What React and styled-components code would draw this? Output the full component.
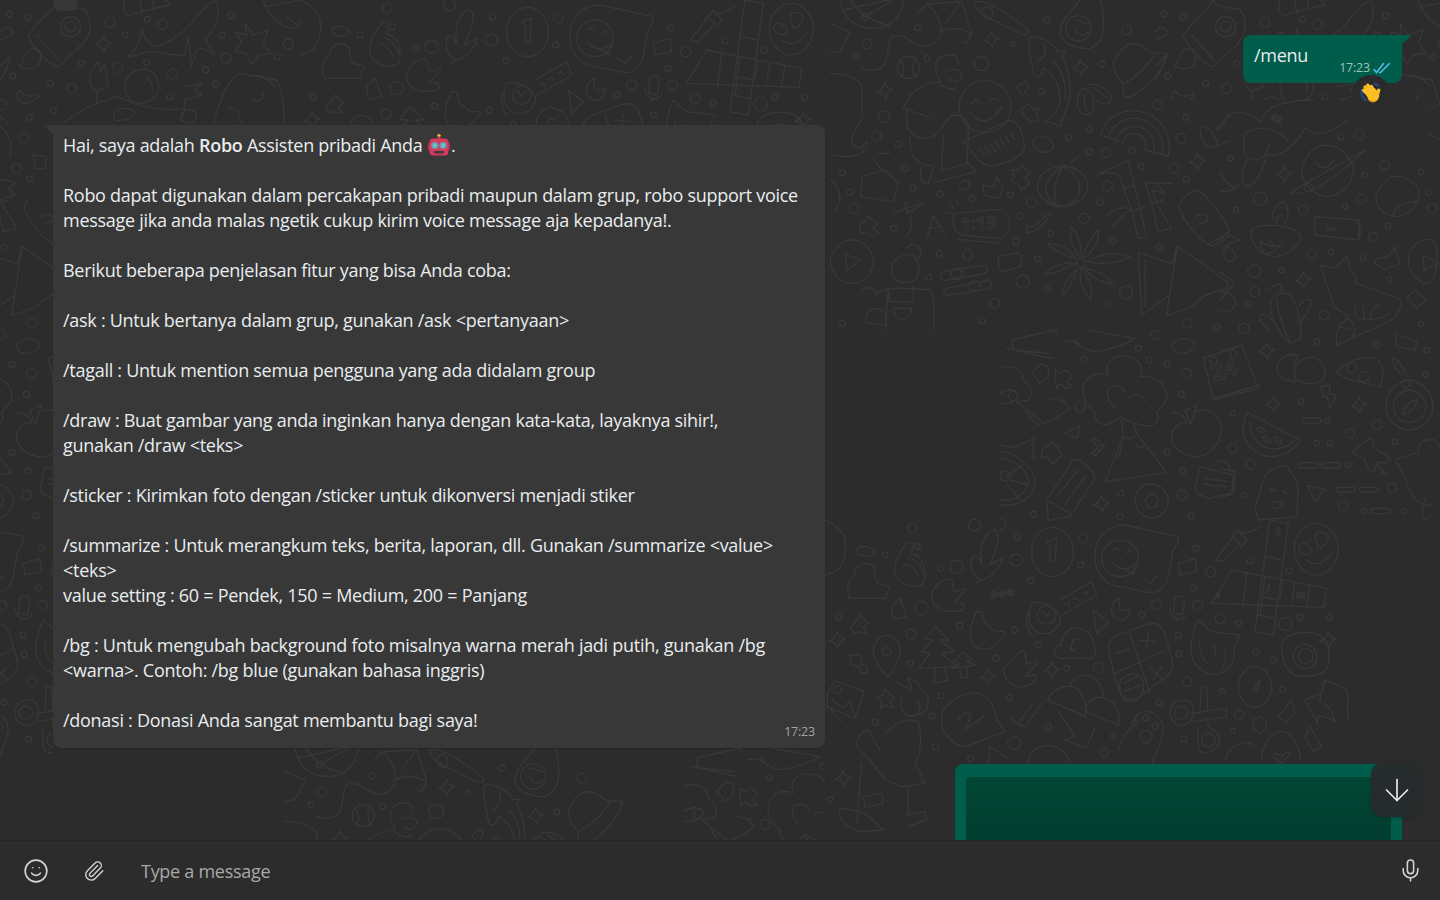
import React from "react";
import styled, { createGlobalStyle } from "styled-components";
import { ArrowDown, Mic, Paperclip, Smile } from "lucide-react";

const GlobalStyle = createGlobalStyle`
  html, body, #root { margin: 0; height: 100%; }
  body {
    background: #2c2c2c;
    overflow: hidden;
    font-family: "Open Sans", "Noto Sans", sans-serif;
  }
`;

const Page = styled.div`
  height: 900px;
  display: flex;
  flex-direction: column;
`;

const Chat = styled.main`
  position: relative;
  flex: 1;
  overflow: hidden;
  background: #2c2c2c;
  display: flex;
  flex-direction: column;
`;

const Wall = styled.svg`
  position: absolute;
  inset: 0;
  width: 1440px;
  height: 840px;
  fill: none;
  stroke: #383838;
  stroke-linecap: round;
  stroke-linejoin: round;

  text {
    fill: none;
    stroke: #383838;
    font-family: "Open Sans", sans-serif;
    font-weight: 700;
  }
`;

const PrevStub = styled.div`
  position: relative;
  flex: none;
  width: 23px;
  height: 11px;
  margin-left: 54px;
  background: #373737;
  border-radius: 0 0 6px 6px;
`;

const Row = styled.div`
  position: relative;
  flex: none;
  display: flex;
  justify-content: ${(p) => (p.$out ? "flex-end" : "flex-start")};
  margin-top: ${(p) => p.$top}px;
  padding: ${(p) => (p.$out ? "0 38px 0 0" : "0 0 0 53px")};
`;

const Bubble = styled.div`
  position: relative;
  box-sizing: border-box;
  font-size: 18px;
  line-height: 25px;
  letter-spacing: -0.28px;
  color: #e9edef;
  white-space: pre-wrap;
`;

const OutBubble = styled(Bubble)`
  width: 159px;
  height: 48px;
  padding: 8px 11px;
  background: #005c4b;
  border-radius: 8px 0 8px 8px;

  &::after {
    content: "";
    position: absolute;
    top: 0;
    right: -9px;
    width: 10px;
    height: 10px;
    background: #005c4b;
    clip-path: polygon(0 0, 80% 0, 100% 12%, 0 100%);
  }
`;

const InBubble = styled(Bubble)`
  width: 772px;
  height: 623px;
  padding: 8px 10px;
  background: #383838;
  border-radius: 0 8px 8px 8px;
  box-shadow: 0 1px 1px rgba(0, 0, 0, 0.15);

  &::before {
    content: "";
    position: absolute;
    top: 0;
    left: -9px;
    width: 10px;
    height: 11px;
    background: #383838;
    clip-path: polygon(0 0, 100% 0, 100% 100%, 35% 35%, 0 8%);
  }
`;

const Time = styled.span`
  position: absolute;
  display: flex;
  align-items: center;
  gap: 3px;
  right: ${(p) => p.$right}px;
  bottom: ${(p) => p.$bottom}px;
  font-size: 12.5px;
  line-height: 16px;
  letter-spacing: -0.2px;
  color: ${(p) => p.$color};
`;

const Reaction = styled.div`
  position: absolute;
  right: 12px;
  top: 40px;
  width: 38px;
  height: 36px;
  display: flex;
  align-items: center;
  justify-content: center;
  border-radius: 50%;
  background: #2b2b2b;
`;

const Strong = styled.b`
  font-weight: 600;
`;

const Inline = styled.svg`
  width: 24px;
  height: 24px;
  vertical-align: -5px;
`;

const Hand = styled(Inline)`
  width: 22px;
  height: 22px;
`;

const MediaBubble = styled.div`
  flex: none;
  box-sizing: border-box;
  width: 447px;
  height: 90px;
  margin: 16px 38px 0 auto;
  padding: 13px 11px 0;
  background: #005c4b;
  border-radius: 8px 8px 0 0;
  position: relative;
`;

const MediaInner = styled.div`
  height: 100%;
  border-radius: 4px 4px 0 0;
  background: linear-gradient(#014634, #003c2e);
`;

const ScrollDown = styled.button`
  position: absolute;
  right: 17px;
  bottom: 23px;
  width: 52px;
  height: 54px;
  padding: 0;
  border: 0;
  border-radius: 12px;
  background: #262c2b;
  color: #e9edef;
  display: flex;
  align-items: center;
  justify-content: center;
  box-shadow: 0 1px 3px rgba(0, 0, 0, 0.2);
`;

const Composer = styled.footer`
  flex: none;
  box-sizing: border-box;
  height: 60px;
  display: flex;
  align-items: center;
  padding: 0 0 0 7px;
  background: #2c2c2c;
  border-top: 1px solid #252525;
`;

const IconButton = styled.button`
  flex: none;
  width: ${(p) => p.$w}px;
  height: 40px;
  padding: 0;
  border: 0;
  background: transparent;
  color: #d4d4d4;
  display: flex;
  align-items: center;
  justify-content: center;
`;

const Field = styled.input`
  flex: 1;
  min-width: 0;
  margin-left: 17px;
  border: 0;
  outline: 0;
  background: transparent;
  color: #e9edef;
  font: 18px "Open Sans", sans-serif;
  letter-spacing: -0.28px;

  &::placeholder {
    color: #a9a9a9;
    opacity: 1;
  }
`;

// wallpaper doodles, traced in the coordinates of 3x crops so each group is scaled back by 1/3
const upperMiddle = {
  paths: [
    // person hugging smiley
    "M220 325C240 270 290 245 330 245M220 325L300 352M232 330C220 390 250 415 290 415C340 410 340 350 375 345C400 345 415 365 415 385L412 490L340 510M240 410C235 470 260 495 305 498M340 405L335 510M275 500C265 530 280 555 295 550L310 500M310 548L440 515L415 490M325 245C345 270 370 270 380 260M330 240C310 210 310 170 350 165C385 160 390 190 380 195M350 215C370 205 395 205 395 225C395 245 370 250 358 235",
    "M418 335Q465 395 515 322M425 312Q438 290 450 310M480 305Q492 285 503 302",
    "M400 425L530 365C560 355 575 385 585 440C580 470 530 490 490 498C450 500 430 460 415 440ZM450 445L462 465M465 437L482 462M480 430L498 455M495 422L510 445M510 414L525 438M525 405L538 428M540 398L555 420",
    // kite
    "M265 40L290 12L395 5L425 100L410 130L395 125M290 12C320 30 340 80 330 100M390 10L350 65M330 95C360 80 400 85 420 100M330 110C310 140 280 145 255 130C230 115 210 100 185 110C170 130 180 190 150 205C130 215 110 210 95 205",
    // top ball and mid stuff
    "M30 0C40 60 80 85 130 85C180 85 215 50 220 0M40 30L220 -10M105 50L60 0M105 50L190 0M105 50L180 80",
    "M208 180C225 195 225 215 212 232M260 175C245 190 245 215 258 232",
    "M435 5C470 -5 560 60 595 90C600 105 585 105 570 100L480 55C450 40 430 20 435 5ZM460 25C480 10 500 40 480 60C470 60 445 40 460 25Z",
    // avocado
    "M750 0C720 40 690 60 690 100C695 130 740 150 780 145C820 130 825 90 820 50C820 20 815 10 810 0M735 62C745 58 760 70 780 72M735 90C745 110 765 110 775 95",
    // fish
    "M600 110C625 105 665 125 685 155L705 155L695 170C720 210 725 280 715 310C700 350 690 370 695 380C680 375 660 365 645 365C670 350 685 330 690 300C690 250 665 215 640 205C635 225 620 240 612 225C605 190 590 140 600 110ZM640 130C655 150 640 175 625 185M670 185C690 200 710 240 705 300",
    // coffee beans
    "M765 265C785 270 795 300 790 325C785 350 755 350 745 325C738 295 745 265 765 265ZM770 255C800 245 840 270 845 295C840 320 815 312 795 300M765 280C760 300 765 320 770 335M790 262C805 275 820 285 835 295",
    // hat
    "M905 130C930 130 945 145 965 158L1012 160C1010 190 960 265 900 290C880 295 878 280 878 250C860 230 850 210 850 190C865 155 885 135 905 130ZM885 250C925 225 960 190 975 160",
    // rainbow
    "M812 405C825 350 880 325 930 335C990 345 1030 400 1015 468L945 450C955 420 935 400 910 400C890 400 880 415 878 428ZM835 412C850 370 890 350 925 355C975 365 1005 410 998 462M858 420C868 390 900 375 925 380C955 385 980 420 972 456",
    // bamboo
    "M800 525L895 482L915 565L950 710L925 715L905 630L880 565C875 530 865 505 800 525ZM880 568L915 555M905 632L940 622M940 548L1025 550L980 550L1005 580L965 570L985 620L1025 685L985 695L965 610L945 548M965 610L1000 600M830 645C860 620 895 620 905 630C880 640 860 665 845 680",
    // lantern
    "M697 500C655 500 622 525 622 558C622 590 655 615 697 618C740 618 773 590 773 558C773 525 740 500 697 500ZM697 500C665 520 645 545 648 575C655 600 670 610 680 615M697 500C675 540 668 580 680 615M697 500C735 515 755 545 748 580C740 600 725 610 715 612M700 495L740 505M720 490C730 485 735 475 748 468M650 605C655 620 690 625 695 615M660 640C650 670 620 695 590 700L592 680C620 680 640 660 650 640",
    // flower
    "M752 775C730 745 715 710 722 680C750 700 755 745 752 775ZM760 772C765 740 790 705 805 690C808 720 790 760 760 772ZM770 785C810 760 860 755 900 770C870 790 815 795 770 785ZM765 805C800 810 830 825 850 850C815 850 780 830 765 805ZM752 805C780 830 790 870 782 900C760 880 745 840 752 805ZM742 808C730 840 715 870 698 888C695 860 715 825 742 808ZM735 790C700 810 670 825 645 820C670 795 705 785 735 790ZM738 775C710 770 675 755 655 732C690 730 725 750 738 775Z",
    // tent
    "M925 758L1028 792L1040 738C1100 780 1150 810 1195 850L1190 870C1150 870 1110 890 1085 920L1018 945L1010 945L1042 738M925 758L935 945L1020 885M945 780L945 920",
    // clock
    "M370 640L510 628C530 630 540 650 538 680C530 710 520 715 500 715L395 705C375 700 368 680 370 640ZM390 712L388 718L510 730L510 716M350 637L368 640M358 612L372 625M380 598L385 616",
    // sliders
    "M340 815L465 795C478 805 470 820 460 822L340 842C325 835 328 820 340 815ZM350 865L475 840C490 850 485 865 470 868L350 887C338 880 338 870 350 865Z",
    // grandma
    "M185 800C190 770 230 755 255 770C270 785 270 815 260 835C240 855 205 850 190 835C183 825 184 810 185 800ZM230 745C240 730 265 730 272 750C275 765 268 775 255 778M140 880C165 865 205 860 300 870C310 880 312 900 312 990M175 865L178 905L250 905L250 860M190 925L245 925C245 960 190 975 190 925ZM110 970L178 975M175 870L165 990",
    "M92 880C100 855 135 860 140 885M110 970C100 950 115 925 140 925C165 930 170 950 170 975",
    // play button
    "M0 785C5 750 35 720 65 720C100 720 130 750 130 785C130 820 100 850 65 850C30 850 5 820 0 785ZM45 762L92 780L52 812Z",
    // misc bottom
    "M505 770L565 758C575 770 575 790 572 800L515 815C503 805 505 785 505 770Z",
    "M225 605L232 640L283 612M192 640L225 625L280 610M240 650C250 680 240 700 228 712",
    "M292 715L310 645L345 705M298 685L330 680",
    // tube
    "M1100 570C1120 575 1160 620 1200 690L1150 740C1100 720 1060 660 1048 625C1050 600 1075 575 1100 570Z",
    "M1095 655C1100 640 1130 640 1135 655C1135 665 1120 672 1108 668",
    // plus, stars, blobs
    "M545 510L560 510L575 495L600 520L585 535L600 550L575 570L565 552L545 545L555 530Z",
    "M572 330L595 310L612 330L630 325L618 345L628 362L600 365L585 350Z",
    "M430 185L445 170L470 172L478 195L462 212L440 210Z",
    "M90 670L105 665L115 650L145 670L130 685L145 700L125 710L110 695L90 700Z",
    "M490 560L500 530L510 548L520 560L508 595L462 585L460 555Z",
    "M560 260L590 243L595 260L578 288Z",
    "M612 415C625 400 660 410 672 435C670 455 640 465 625 450C610 445 605 430 612 415Z",
    "M0 220C40 220 85 235 95 255C100 300 90 340 100 345C90 370 70 390 65 420C75 460 100 440 110 425C115 460 70 480 10 465",
    "M95 530L165 510L205 550L190 605L93 590Z M130 480C150 500 160 520 165 510M145 460L180 460",
    "M1110 380C1130 370 1170 420 1160 440C1130 450 1110 420 1110 380ZM1160 390L1200 340M1160 440L1200 420",
    "M30 155L60 97L0 70M0 160L30 155",
    "M0 540C30 560 40 600 15 630",
    "M1195 700L1140 730",
  ],
  stars: [[485,118],[165,272],[752,203],[1102,485]],
  dots: [[262,83,9],[110,132,14],[78,170,8],[292,175,9],[548,133,7],[650,60,9],[890,90,14],[815,192,9],[982,315,14],[1068,352,9],[1053,415,15],[778,388,9],[716,412,9],[778,455,9],[828,458,14],[906,452,9],[934,501,9],[1032,505,14],[1069,538,9],[832,558,15],[810,608,9],[762,655,15],[605,608,15],[568,648,9],[662,700,8],[848,722,9],[988,742,9],[558,725,9],[622,777,9],[578,845,20],[652,867,8],[835,912,8],[888,878,20],[495,910,15],[456,962,9],[413,765,15],[328,760,9],[296,832,9],[190,685,9],[72,625,15],[60,577,9],[38,518,9],[205,433,9],[140,408,15],[225,505,9],[248,563,9],[331,582,9],[404,555,15],[425,595,9],[542,585,9],[634,274,9],[1072,970,14],[1160,980,9],[38,970,9]],
  rings: [[235,203,33],[465,320,78],[105,50,10],[752,790,14],[380,822,17],[435,858,17],[745,85,38],[162,350,18]],
  labels: [[392,692,"1:13",54,-3]],
};

const lowerRight = {
  paths: [
    // thumbs hands
    "M250 65C225 90 205 130 210 160C220 195 270 210 295 190C305 165 300 130 280 110L258 100C265 85 265 65 250 65ZM250 115C260 108 290 135 295 160M238 135C250 125 270 145 280 170",
    "M380 180C360 170 330 190 320 225C320 260 350 285 415 270C425 255 410 245 390 245L422 210C420 195 400 220 388 215Z",
    "M455 275C440 300 430 340 440 365C455 395 495 395 520 365L542 340C535 325 510 345 505 330L480 310L470 275Z",
    "M590 390L535 445C535 480 560 505 595 500C625 495 640 470 630 465C615 465 610 470 600 470L638 430C635 420 615 430 605 432L598 395Z",
    // corn
    "M440 115C435 145 445 175 470 180C505 170 530 135 530 115L495 135C515 85 530 50 510 28C480 35 460 80 470 130C460 110 450 100 440 115ZM470 180L455 190",
    // ring 1
    "M620 95C620 50 650 20 685 22C720 25 745 60 745 100C745 140 715 170 680 170C645 170 620 135 620 95ZM665 65L695 55L690 125L675 125L675 75Z",
    // smile bubble
    "M810 110C810 50 850 15 900 15L1060 50C1065 70 1040 90 1040 110L1030 170C1020 210 990 225 960 215L860 195C820 170 810 140 810 110ZM865 90Q875 78 885 92M905 100Q915 85 925 100M860 125Q895 165 935 130M905 150L925 165L930 140M955 175L975 190L1000 165",
    // pen and crossword
    "M1172 120L1225 50L1245 70L1195 125ZM1215 60L1240 30L1265 60L1245 85M1250 40C1270 40 1290 30 1305 20",
    "M1220 150L1505 205L1497 262L1160 250ZM1265 158L1253 265M1320 170L1305 285M1375 180L1365 235M1410 190L1400 245M1455 200L1445 255M1335 0L1390 10L1345 345L1290 335ZM1325 110L1370 120M1310 230L1360 240M1300 285L1345 295",
    // heart face
    "M1408 88C1408 45 1440 10 1472 10C1510 10 1540 45 1540 88C1540 130 1510 165 1472 165C1440 165 1408 130 1408 88ZM1420 85C1425 65 1445 65 1450 80C1465 80 1465 95 1450 105L1430 100ZM1470 50C1475 30 1505 35 1510 50C1510 70 1490 85 1480 85ZM1445 120Q1480 150 1520 100",
    // watch
    "M620 250C650 240 690 260 705 290C710 320 680 345 650 340C620 335 600 300 620 250ZM705 240L800 185L815 225L710 285M718 255C725 245 735 250 733 260M745 238C752 230 762 235 760 245M775 220C780 212 790 215 788 225M650 270L665 290L675 275M610 275C600 300 605 330 620 343",
    // cloud sync
    "M705 415C680 410 685 375 710 375C705 340 745 310 775 330C800 335 805 365 805 370C815 385 815 405 800 415ZM765 360C745 350 730 375 745 395M735 385L745 395L755 385",
    "M805 270L850 305L815 340Z M885 235C855 245 850 285 880 300C900 305 915 290 915 265C895 280 875 265 885 235Z",
    // calculator
    "M850 390C845 370 860 350 880 345L970 312C1000 305 1015 325 1020 345L1042 420C1045 450 1030 470 1010 480L950 525C920 550 885 540 880 500L868 465ZM915 340L975 520M868 460L1025 390M875 400L915 385M945 360L990 365M970 340L965 385M975 440L1015 480M1010 440L985 478",
    "M885 490C890 465 925 455 945 470C965 490 955 530 935 542C905 555 880 530 885 490ZM895 490L935 470M900 515L945 495",
    // mic
    "M1050 235C1055 225 1075 225 1080 240L1072 285L1045 278ZM1035 265C1035 290 1065 310 1085 285M1055 295L1053 305",
    // cat
    "M1120 300L1160 335L1245 345L1225 385C1235 420 1215 455 1180 462C1130 465 1095 430 1098 385C1100 350 1110 320 1120 300ZM1125 365C1120 395 1135 420 1150 432M1200 390C1205 410 1195 440 1188 450M1160 375C1170 375 1175 395 1168 410",
    // camera
    "M1370 380C1370 345 1420 330 1470 340C1510 350 1515 380 1510 430C1505 465 1460 475 1410 465C1380 450 1370 420 1370 380ZM1405 410C1405 385 1425 370 1442 372C1465 375 1478 395 1475 420C1470 440 1450 450 1430 445C1415 440 1405 425 1405 410Z",
    // pin, trees
    "M185 347C220 350 232 385 222 415C210 440 200 460 190 470C165 450 145 420 145 390C148 365 165 345 185 347Z",
    "M330 320L372 360L345 360L390 395L350 400L395 440L280 445L315 400L290 395L325 360L298 358ZM330 445L328 490L370 480L358 440M415 395L440 420L425 425L452 435L380 445L405 430L385 425ZM405 450L408 475L428 472L425 445",
    // mushroom
    "M668 540C680 510 710 495 745 500C770 510 785 545 782 590ZM735 495C745 470 775 460 800 470C825 485 835 510 835 530M782 560C800 525 840 525 865 550C880 570 885 595 880 615L782 575M700 570C710 600 750 630 745 650L720 660L785 685L810 620",
    // paw
    "M880 690C890 650 910 630 930 610C925 580 960 565 985 580C1005 590 1015 610 1015 630C1010 660 995 700 980 730M945 650C945 630 970 625 980 640C985 660 970 670 955 668ZM930 600a9 9 0 1 0 1 0M962 585a9 9 0 1 0 1 0M990 610a9 9 0 1 0 1 0",
    // scissors
    "M1035 575C1040 540 1075 530 1100 550C1110 570 1105 605 1080 615C1050 620 1035 600 1035 575ZM1100 580L1205 565L1205 590L1105 605M1125 565L1130 500L1145 500L1148 570M1120 625C1115 640 1118 680 1125 695C1150 705 1180 690 1185 660C1180 640 1165 625 1150 620L1148 595",
    // compass
    "M1240 500C1240 465 1265 440 1290 440C1320 440 1342 470 1340 505C1335 540 1315 565 1285 562C1260 555 1240 530 1240 500ZM1305 480L1285 510L1295 515Z",
    // signature bubble
    "M350 590C355 555 395 525 445 518C490 520 505 550 515 600L540 635L420 680C385 675 345 640 350 590ZM400 600C420 570 440 570 435 595C425 620 415 630 425 625L475 590",
    // checks
    "M555 590L578 612L625 550M580 615L603 618L652 548",
    // left person
    "M245 480C265 470 280 490 290 510C320 530 315 570 280 585M230 530C220 560 235 590 265 590C285 580 290 565 280 545M185 640C205 610 250 590 280 605C290 640 290 700 270 730L300 790L230 800L180 780L135 720L95 680C95 650 110 635 130 630L165 690M110 730L95 910M250 800L250 880M115 830L170 820L175 850L120 862ZM245 885L300 875L305 900L250 920M45 870C55 855 100 880 120 880L175 930L100 935C60 920 35 890 45 870Z",
    "M220 490L250 505M250 470L260 510",
    // photo
    "M8 520L30 482L118 515L90 595L5 560ZM20 540L55 565L75 540L90 590M0 550L50 605",
    "M1490 520L1500 480L1568 510L1568 600M1440 540L1488 520L1485 545C1510 550 1525 580 1530 605C1510 590 1485 585 1475 590L1478 610Z",
    // flower asterisk
    "M155 530L175 525L180 505L195 525L210 530L195 545L205 565L180 555L165 565L170 545Z",
    "M80 320L95 300L105 285L130 310L115 320L125 340L100 335L90 340L75 325Z",
    "M1285 600L1305 590L1325 605L1322 625L1305 640L1282 625Z",
    "M75 405L108 405L108 435L125 437L125 458L108 458L105 440L78 435Z",
    "M200 260L225 235L245 290L205 298Z",
    "M1060 130L1110 115L1115 155L1065 165Z",
    "M1360 590L1400 540L1410 580L1385 608Z",
    "M1440 650L1455 620L1490 680L1465 695Z",
    "M95 90C105 70 145 80 150 100C130 115 100 110 95 90Z",
    // tall stuff
    "M1200 720C1210 680 1260 650 1290 680M1310 720C1310 670 1345 635 1370 635C1405 640 1425 680 1425 720M1370 710C1350 695 1340 700 1345 710L1370 730L1395 705C1395 690 1380 695 1370 710Z",
    "M610 730C605 690 660 660 700 685C720 695 735 715 735 730M490 730L495 680L550 715",
    // shorthand
    "M0 0C40 20 70 40 60 100C55 140 30 160 0 165",
    "M75 235C60 215 70 170 90 165C85 140 120 120 145 140C155 160 145 180 160 190L195 200L180 235Z",
  ],
  stars: [[37,360],[490,470],[680,450],[1510,360],[55,775]],
  dots: [[262,25,14],[277,80,9],[180,105,9],[347,145,9],[395,140,20],[448,15,18],[578,50,9],[574,120,18],[618,182,9],[775,55,14],[767,135,9],[1113,85,9],[1157,155,15],[1276,122,9],[1392,152,9],[1105,205,9],[1118,255,15],[995,255,15],[950,285,9],[1186,296,15],[1240,310,9],[1382,312,20],[1424,291,9],[1514,292,9],[1060,345,9],[1062,402,9],[820,442,15],[725,445,9],[640,375,9],[568,330,9],[514,415,9],[404,318,9],[290,265,20],[258,342,15],[40,290,9],[255,430,9],[348,527,9],[320,588,9],[150,606,9],[1087,485,14],[1192,514,7],[1003,547,9],[1373,507,9],[1345,420,9],[1292,397,9],[1243,584,14],[1224,632,7],[1076,657,9],[865,648,7],[838,698,12],[670,620,9],[553,533,9],[568,670,20],[437,715,9],[332,680,9],[15,838,8]],
  rings: [[1068,578,20],[1150,660,20],[885,115,55],[1442,408,22],[665,285,28],[185,395,12],[38,508,12]],
  labels: [[1350,45,"t",36,8],[1170,232,"a",24,10],[1325,212,"j",28,10],[1412,232,"m",30,10],[498,250,"***",46,-8]],
};

const rightColumn = {
  paths: [
    "M0 90C20 40 50 25 90 45L125 65C130 20 200 0 280 0M75 100C130 70 180 90 205 125M75 100C65 140 70 180 105 180C130 180 145 155 150 130M80 180C70 200 60 230 75 255C95 265 120 240 140 165C170 170 210 160 255 85C290 110 330 105 380 60",
    "M245 215C250 170 280 135 320 135C365 140 400 175 400 215C395 260 360 290 315 290C275 280 248 250 245 215ZM285 185Q315 225 345 175M210 280L265 245L435 150C420 165 390 195 350 225L280 270C250 280 225 285 210 280Z",
    "M495 245C520 215 575 230 597 270C600 310 575 345 530 350C490 345 465 320 468 290C470 275 480 260 495 245ZM520 345C525 320 550 305 590 305",
    "M92 395C105 365 230 370 242 410C240 440 200 465 165 470C130 470 95 440 92 395ZM160 360C150 335 170 310 190 305C205 320 210 345 195 370M170 370C165 350 180 340 190 350M120 425L155 440L185 435L150 460L130 460ZM150 420L165 440",
    "M285 350L420 360L415 420L285 405ZM410 365L425 385L415 420",
    "M470 475L505 470L525 440L538 490L495 510L465 490Z",
    "M565 480C565 445 595 418 630 418C660 420 660 540 625 550C590 548 565 515 565 480ZM610 465L655 490L612 512Z",
    // fox
    "M302 495L340 505L382 470L392 515L410 530L405 548L545 600C540 640 520 660 495 670L350 735C345 700 360 665 385 655L380 645L340 620C340 590 320 570 315 540ZM385 655C410 680 410 700 395 710M360 680L390 690M430 620L432 655M450 650C455 625 470 615 478 612M405 620L408 650M415 655C450 660 490 660 505 640",
    // cactus
    "M150 610C160 580 195 570 215 590C235 620 245 680 242 715L210 730C180 710 150 650 150 610ZM170 595C170 630 190 680 210 730M145 570C155 560 170 555 178 550L188 575M238 620C250 590 275 595 275 610C265 630 250 660 240 670M150 690C130 680 115 660 122 645C135 640 150 650 160 665",
    // dumpling
    "M170 805C170 780 200 758 235 765C225 775 220 800 222 815L230 845C195 845 170 830 170 805ZM225 810C230 780 265 765 290 775C315 790 320 820 310 840C290 855 250 855 235 840",
    // eyes
    "M350 820C370 785 440 760 475 780C495 800 490 840 480 860L390 840ZM395 790a15 15 0 1 0 1 0M430 815a15 15 0 1 0 1 0",
    // bolt
    "M302 860L330 855L328 880L350 885L330 925L322 890L310 890Z",
    // compass
    "M498 920C500 870 540 840 570 840C610 845 640 880 638 925C635 965 600 990 565 990C530 985 498 960 498 920ZM520 920C520 895 540 870 570 870C600 875 620 895 618 925C615 950 590 970 565 968C540 965 520 945 520 920ZM548 945C550 925 565 905 590 898C590 920 570 940 548 945ZM545 825C530 810 515 790 520 775C540 775 550 810 560 825",
    // watermelon
    "M82 938L242 1020C225 1050 185 1070 145 1070C95 1060 65 1020 70 975C72 960 75 950 82 938ZM92 970C85 1005 120 1045 160 1048C190 1045 215 1035 225 1020M110 985C115 980 130 985 135 995C125 1000 112 995 110 985ZM130 1010C135 1000 150 1015 150 1028C140 1030 130 1020 130 1010ZM165 1010C175 1010 185 1025 185 1032C175 1035 165 1025 165 1010Z",
    // pin
    "M397 1055L448 1015L462 1022L458 1040L510 1075L498 1090L472 1085L462 1115L445 1110L432 1075L405 1065ZM475 1095L502 1125L482 1115",
    // popsicle
    "M130 1140C140 1105 180 1095 205 1100C205 1115 220 1120 225 1135C240 1150 230 1210 232 1250L115 1260L105 1225ZM150 1165L170 1170L150 1175M205 1160L190 1175L208 1185M155 1210C160 1205 180 1205 188 1205C190 1220 175 1230 165 1225C160 1225 155 1220 155 1210Z",
    "M262 1157L315 1168L285 1205Z",
    "M528 1080C550 1070 580 1060 595 1060C590 1025 620 1015 645 1020L660 1040M528 1085L555 1130C570 1190 600 1225 640 1215M620 1195C600 1220 605 1260 620 1260",
    // chat lock
    "M0 1105L45 1115L40 1180L0 1195M0 1140L22 1145M0 1155L20 1160",
    "M525 700L590 725L585 750L530 740Z",
    "M560 595L585 570L620 600L590 625Z",
    "M60 250C30 280 10 280 0 270M0 215L15 240L40 265",
    "M0 430L30 405L60 420L30 430L10 440M20 440C50 455 55 480 30 485C10 485 5 460 20 440Z",
    "M0 515L45 550L0 600M0 580C30 570 45 590 48 605C40 635 20 640 0 635",
    "M630 30L660 10M625 100L660 120",
  ],
  stars: [[193,222],[250,540],[140,752],[160,912],[417,915]],
  dots: [[363,110,9],[418,106,14],[494,194,14],[434,225,8],[603,217,8],[626,277,9],[637,325,15],[375,318,8],[424,297,14],[249,330,14],[121,296,20],[48,330,8],[30,175,8],[505,378,8],[460,410,14],[275,463,14],[333,455,8],[429,475,8],[508,539,8],[103,514,20],[185,510,8],[105,575,15],[87,612,8],[72,685,15],[311,645,14],[290,725,8],[470,735,8],[602,672,8],[620,750,8],[617,823,8],[243,904,8],[323,962,8],[38,940,8],[471,974,14],[390,1000,14],[290,1030,8],[330,1030,8],[525,1025,8],[92,1093,14],[73,1186,8],[383,1095,8],[516,1163,14],[370,1218,14],[432,1233,8],[552,1233,8],[38,1045,14]],
  rings: [[265,262,12],[558,850,12]],
  pills: [[247,954,303,970],[236,1088,294,1104],[304,1088,362,1104],[348,1162,406,1176],[418,1162,476,1176],[452,1225,512,1241]],
  labels: [[150,60,"42",30,20],[318,400,"···",36,0]],
};

const centre = {
  paths: [
    // volcano tree
    "M360 260C320 300 280 285 285 245C250 225 235 170 265 145C285 125 315 130 325 135C310 95 345 70 385 80C425 85 430 125 420 140C465 135 505 165 500 205C490 235 465 245 470 250C485 275 455 295 425 285C400 280 385 275 360 260ZM325 175C345 160 370 170 375 190M385 205C400 185 430 190 435 215M322 180C320 200 330 225 345 230",
    "M365 270L370 320L315 455L500 428L410 310L400 280M370 320C385 330 400 325 412 310M362 345C365 365 360 380 350 380M405 340L420 355L435 345",
    // apple
    "M560 240L590 225L572 285L555 240ZM515 250C535 245 555 260 560 278M555 280C535 275 510 300 515 330C525 365 570 385 600 380C640 370 665 330 665 295C660 250 620 230 590 245",
    // calendar
    "M610 85L725 45L775 175L640 210ZM640 80a10 12 0 1 0 1 0M700 60a10 12 0 1 0 1 0M640 205L780 165",
    // house
    "M35 30L165 0L170 15M35 30L40 60L145 70M18 55C60 60 110 80 160 85",
    // fox tail fish
    "M190 35C230 25 250 60 280 65C340 60 390 35 405 25L260 0M225 30L245 50",
    "M515 45C530 25 560 20 580 35C590 55 570 70 540 70C525 70 515 60 515 45Z",
    // flower left
    "M0 115C20 105 70 110 70 150C90 165 105 190 85 210L50 215L130 280C160 270 190 250 210 235L180 210M0 190C20 175 50 175 55 195C50 215 20 225 0 220",
    "M130 280C110 290 100 280 75 240M150 205L200 215",
    "M95 130L125 100L145 110L145 140L120 160Z",
    "M165 120L180 130L200 120L218 140L200 155L218 170L198 175L180 160L170 175L165 155Z",
    // small
    "M195 310L240 285L232 325Z",
    "M275 330C285 320 300 330 300 345L315 345L285 378L275 370L295 350Z",
    "M125 360L160 335L188 375L158 402L140 380L125 385Z",
    // wheel
    "M0 365C60 370 105 420 105 460C100 510 50 530 0 525M0 345L45 352L100 325L100 385M0 385C40 385 85 420 85 455C80 495 40 515 0 510M20 440L70 405M30 450L80 465M20 460L60 510",
    // pencil
    "M140 510L220 390C240 385 285 420 285 445L210 560L145 572ZM170 500L235 420M195 525L258 435M145 515C165 520 190 540 210 548",
    // lock chat
    "M638 410C660 375 690 395 690 425M600 410L700 435L695 490L625 505L600 495L585 480ZM610 445L680 455M610 462L660 470",
    // star disc
    "M405 510C405 480 430 462 455 462C485 465 505 490 505 515C500 545 480 565 455 565C425 560 405 540 405 510ZM435 510L455 490L475 505L470 530L445 535Z",
    "M0 565C20 565 25 600 0 600",
  ],
  stars: [[305,522]],
  dots: [[467,15,14],[415,55,9],[253,88,9],[447,90,9],[502,103,9],[560,130,15],[544,193,9],[502,367,9],[548,423,9],[362,490,9],[546,495,15],[240,230,15],[574,557,9],[360,560,9],[101,553,9]],
  rings: [[15,438,15],[40,198,14]],
  labels: [[640,155,"24",70,-16]],
};

const topLeft = {
  paths: [
    "M175 0C180 20 220 25 250 25C275 50 280 90 250 130L175 200C150 195 110 160 85 110C90 95 120 60 155 30ZM110 105L180 185",
    "M60 200C75 170 80 145 105 145C130 150 125 190 110 200C90 210 70 205 60 200Z",
    "M385 170C410 145 425 120 425 90C435 110 440 130 465 140C505 130 555 100 590 50C610 25 635 0 650 5C660 40 650 90 615 115L645 165C625 150 600 140 590 150L575 200C570 170 570 130 565 115L555 165C530 170 480 155 450 155C430 155 410 170 385 170Z",
    "M375 0L370 30C375 45 395 50 400 40L510 15L500 0M420 0L425 40M460 0L460 30",
    "M735 70L760 105L805 90L790 130L815 160L775 165L755 195L740 160L705 155L725 125L705 95L740 105Z",
    "M790 0C800 40 840 85 880 85C895 80 900 70 900 60M800 20L900 0M860 50L900 80",
    "M375 260C375 225 405 207 435 207C465 210 478 240 475 270C470 295 440 312 410 310C390 305 375 285 375 260ZM440 235C455 245 460 260 455 275",
    "M270 225C275 210 290 190 295 185L300 215L315 190L320 230L325 260L290 275C275 265 265 245 270 225ZM290 275L290 310L350 290C400 310 470 340 545 325M290 310C250 325 220 345 190 370M340 340C360 320 395 320 405 340C395 355 370 365 345 360Z",
    "M60 270C45 285 50 310 80 310C105 305 120 290 115 280C95 295 70 290 60 270Z",
    "M550 260L605 250L585 270L605 285L555 300L550 345",
    "M545 340C560 320 590 330 590 350C590 370 560 375 545 360Z",
    "M640 370C660 300 680 240 720 220L830 240C850 280 855 340 850 375M760 300C770 310 790 300 790 280M680 330C690 320 710 320 715 340C710 365 730 360 730 370",
    "M0 380C30 400 40 440 30 470M0 350C10 360 25 365 25 375",
    "M100 465L140 470L135 505L105 505Z",
    "M0 95C25 70 45 90 35 105L0 120",
    "M0 200C25 180 35 155 30 170C20 220 0 240 0 240",
    "M0 540C20 540 40 545 48 550L25 565L45 585L0 600",
    "M760 230C780 220 810 240 825 260",
  ],
  stars: [[310,132]],
  dots: [[85,52,9],[28,42,9],[330,68,15],[375,105,9],[442,58,9],[488,73,15],[693,47,9],[666,105,9],[678,175,15],[832,170,9],[865,132,15],[245,190,9],[353,202,15],[440,187,9],[518,222,15],[617,210,9],[647,252,9],[510,290,9],[38,228,9],[152,250,9],[215,265,15],[5,315,15],[160,333,9],[88,352,9],[72,415,15],[50,505,15],[88,537,9]],
  rings: [[212,80,30],[212,80,16]],
  labels: [],
};

// the pattern repeats every 1155px across, so the edges reuse what was traced on the far side
const placements = [
  { art: upperMiddle, x: 830, y: 0 },
  { art: lowerRight, x: 825, y: 520 },
  { art: rightColumn, x: 1220, y: 100 },
  { art: centre, x: 1000, y: 330 },
  { art: topLeft, x: 0, y: 0 },
  { art: topLeft, x: 1155, y: 0, clip: "wrapTop" },
  { art: upperMiddle, x: -325, y: 0, clip: "leftEdge" },
  { art: centre, x: -155, y: 330, clip: "leftEdge" },
  { art: lowerRight, x: -330, y: 520, clip: "leftEdge" },
  { art: lowerRight, x: 300, y: 0, clip: "topBand" },
  { art: upperMiddle, x: 285, y: 748, clip: "bottomBand" },
  { art: centre, x: 685, y: 748, clip: "bottomBand" },
];

const sparkle = (x, y, r = 24) =>
  `M${x} ${y - r}Q${x + 4} ${y - 6} ${x + r} ${y - 3}Q${x + 6} ${y + 3} ${x + 2} ${y + r}Q${x - 4} ${y + 5} ${x - r} ${y + 3}Q${x - 6} ${y - 4} ${x} ${y - r}Z`;

function Doodles({ art, x, y, clip }) {
  // the clipped copies are only there for texture, their little numerals would just get cut off
  const labels = clip ? [] : art.labels;
  return (
    <g clipPath={clip ? `url(#${clip})` : undefined}>
      <g transform={`translate(${x} ${y}) scale(0.3333)`} strokeWidth="4">
        {art.paths.map((d, i) => (
          <path key={i} d={d} />
        ))}
        {art.stars.map(([sx, sy], i) => (
          <path key={i} d={sparkle(sx, sy)} />
        ))}
        {[...art.dots, ...art.rings].map(([cx, cy, r], i) => (
          <circle key={i} cx={cx} cy={cy} r={r} />
        ))}
        {(art.pills || []).map(([x1, y1, x2, y2], i) => (
          <rect key={i} x={x1} y={y1} width={x2 - x1} height={y2 - y1} rx="8" />
        ))}
        {labels.map(([lx, ly, t, size, rot], i) => (
          <text key={i} x={lx} y={ly} fontSize={size} strokeWidth="3" transform={`rotate(${rot} ${lx} ${ly})`}>
            {t}
          </text>
        ))}
      </g>
    </g>
  );
}

function Wallpaper() {
  return (
    <Wall viewBox="0 0 1440 840">
      <defs>
        <clipPath id="wrapTop">
          <rect x="1155" y="0" width="285" height="100" />
        </clipPath>
        <clipPath id="leftEdge">
          <rect x="0" y="200" width="53" height="640" />
        </clipPath>
        <clipPath id="topBand">
          <rect x="300" y="0" width="525" height="125" />
        </clipPath>
        <clipPath id="bottomBand">
          <rect x="285" y="748" width="540" height="92" />
        </clipPath>
      </defs>
      {placements.map((p) => (
        <Doodles key={`${p.x}-${p.y}`} {...p} />
      ))}
    </Wall>
  );
}

const RobotFace = () => (
  <Inline viewBox="0 0 24 24">
    <circle cx="12" cy="2.6" r="1.7" fill="#f4b83a" />
    <rect x="10.8" y="3.5" width="2.4" height="3" fill="#b9475c" />
    <rect x="0.8" y="10" width="3" height="7" rx="1" fill="#a8324b" />
    <rect x="20.2" y="10" width="3" height="7" rx="1" fill="#a8324b" />
    <rect x="2.5" y="5.5" width="19" height="17" rx="4" fill="#d8395a" />
    <circle cx="7.8" cy="12.5" r="3.7" fill="#7d8ca0" />
    <circle cx="16.2" cy="12.5" r="3.7" fill="#7d8ca0" />
    <circle cx="7.8" cy="12.5" r="2.3" fill="#5fc4cf" />
    <circle cx="16.2" cy="12.5" r="2.3" fill="#5fc4cf" />
    <rect x="7" y="18" width="10" height="2.6" rx="0.8" fill="#3b3b48" />
  </Inline>
);

const WavingHand = () => (
  <Hand viewBox="0 0 24 24">
    <path d="M2 9C1 13 3 18 6 20" stroke="#2f3f78" strokeWidth="3" fill="none" strokeLinecap="round" />
    <path d="M16 2L20 4" stroke="#2f3f78" strokeWidth="3" fill="none" strokeLinecap="round" />
    <g stroke="#fbbf24" strokeWidth="3.7" strokeLinecap="round" fill="none">
      <path d="M11 16L4 9" />
      <path d="M12 14L5.5 5.5" />
      <path d="M14 13L8.5 3.5" />
      <path d="M16 12L12.5 5" />
      <path d="M18 15L20.5 9" />
    </g>
    <path d="M6 12.5L16 6.5L21 12.5C21.5 18 18 22.5 13.5 22C10.5 21.5 8 17 6 12.5Z" fill="#fbbf24" />
    <path d="M9 19C11 21.5 15 22.5 18 20" stroke="#e58f17" strokeWidth="1.2" fill="none" strokeLinecap="round" />
  </Hand>
);

const Ticks = () => (
  <svg width="18" height="12" viewBox="0 0 18 12" fill="none" stroke="#53bdeb" strokeWidth="1.5" strokeLinecap="round">
    <path d="M1 7.5L3.5 10.5L10.5 1.5" />
    <path d="M6.5 10.5L7.5 10.5L16.5 1.5" />
  </svg>
);

export default function App() {
  return (
    <>
      <GlobalStyle />
      <Page>
        <Chat>
          <Wallpaper />
          <PrevStub />
          <Row $out $top={24}>
            <OutBubble>
              /menu
              <Time $right={11} $bottom={7} $color="#9dc4bb">
                17:23
                <Ticks />
              </Time>
              <Reaction>
                <WavingHand />
              </Reaction>
            </OutBubble>
          </Row>
          <Row $top={42}>
            <InBubble>
              Hai, saya adalah <Strong>Robo</Strong> Assisten pribadi Anda <RobotFace />.{"\n\n"}
              Robo dapat digunakan dalam percakapan pribadi maupun dalam grup, robo support voice{"\n"}
              message jika anda malas ngetik cukup kirim voice message aja kepadanya!.{"\n\n"}
              Berikut beberapa penjelasan fitur yang bisa Anda coba:{"\n\n"}
              /ask : Untuk bertanya dalam grup, gunakan /ask {"<pertanyaan>"}{"\n\n"}
              /tagall : Untuk mention semua pengguna yang ada didalam group{"\n\n"}
              /draw : Buat gambar yang anda inginkan hanya dengan kata-kata, layaknya sihir!,{"\n"}
              gunakan /draw {"<teks>"}{"\n\n"}
              /sticker : Kirimkan foto dengan /sticker untuk dikonversi menjadi stiker{"\n\n"}
              /summarize : Untuk merangkum teks, berita, laporan, dll. Gunakan /summarize {"<value>"}{"\n"}
              {"<teks>"}{"\n"}
              value setting : 60 = Pendek, 150 = Medium, 200 = Panjang{"\n\n"}
              /bg : Untuk mengubah background foto misalnya warna merah jadi putih, gunakan /bg{"\n"}
              {"<warna>"}. Contoh: /bg blue (gunakan bahasa inggris){"\n\n"}
              /donasi : Donasi Anda sangat membantu bagi saya!
              <Time $right={10} $bottom={8} $color="#a3a3a3">
                17:23
              </Time>
            </InBubble>
          </Row>
          <MediaBubble>
            <MediaInner />
          </MediaBubble>
          <ScrollDown aria-label="Scroll to bottom">
            <ArrowDown size={36} strokeWidth={1.1} />
          </ScrollDown>
        </Chat>
        <Composer>
          <IconButton $w={58} aria-label="Emoji">
            <Smile size={26} strokeWidth={1.5} />
          </IconButton>
          <IconButton $w={57} aria-label="Attach">
            <Paperclip size={22} strokeWidth={1.5} />
          </IconButton>
          <Field placeholder="Type a message" />
          <IconButton $w={60} aria-label="Voice message">
            <Mic size={25} strokeWidth={1.5} />
          </IconButton>
        </Composer>
      </Page>
    </>
  );
}
